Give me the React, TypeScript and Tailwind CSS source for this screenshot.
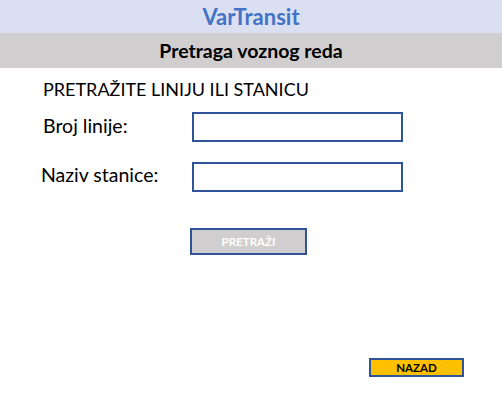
import React from 'react';

const font = { fontFamily: 'Lato, "Open Sans", sans-serif' };

export default function App() {
  return (
    <div className="w-[502px] h-[414px] bg-white text-black" style={font}>
      <div className="h-[33px] bg-[#dae0f2] flex items-center justify-center">
        <span className="text-[22px] font-bold text-[#4472c4] leading-none">VarTransit</span>
      </div>
      <div className="h-[35px] bg-[#d0cece] flex items-center justify-center">
        <span className="text-[19.5px] font-bold leading-none">Pretraga voznog reda</span>
      </div>

      <div className="pl-[43px] pt-[10px]">
        <div className="text-[18px] leading-[22px]">PRETRAŽITE LINIJU ILI STANICU</div>

        <div className="mt-[12px] flex items-center">
          <label className="w-[149px] text-[19.5px] leading-none -mt-[2px]">Broj linije:</label>
          <input className="w-[211px] h-[30px] border-2 border-[#2f5597] outline-none" />
        </div>

        <div className="mt-[20px] flex items-center">
          <label className="w-[151px] -ml-[2px] text-[19.5px] leading-none -mt-[4px]">Naziv stanice:</label>
          <input className="w-[211px] h-[30px] border-2 border-[#2f5597] outline-none" />
        </div>

        <div className="mt-[36px] pl-[147px]">
          <button className="w-[117px] h-[27px] bg-[#d0cece] border-2 border-[#2f5597] text-white text-[11.5px] font-bold">
            PRETRAŽI
          </button>
        </div>
      </div>

      <div className="mt-[99px] pl-[369px]">
        <button className="w-[95px] h-[19px] bg-[#ffc000] border-2 border-[#2f5597] text-[11.5px] font-bold leading-none">
          NAZAD
        </button>
      </div>
    </div>
  );
}
